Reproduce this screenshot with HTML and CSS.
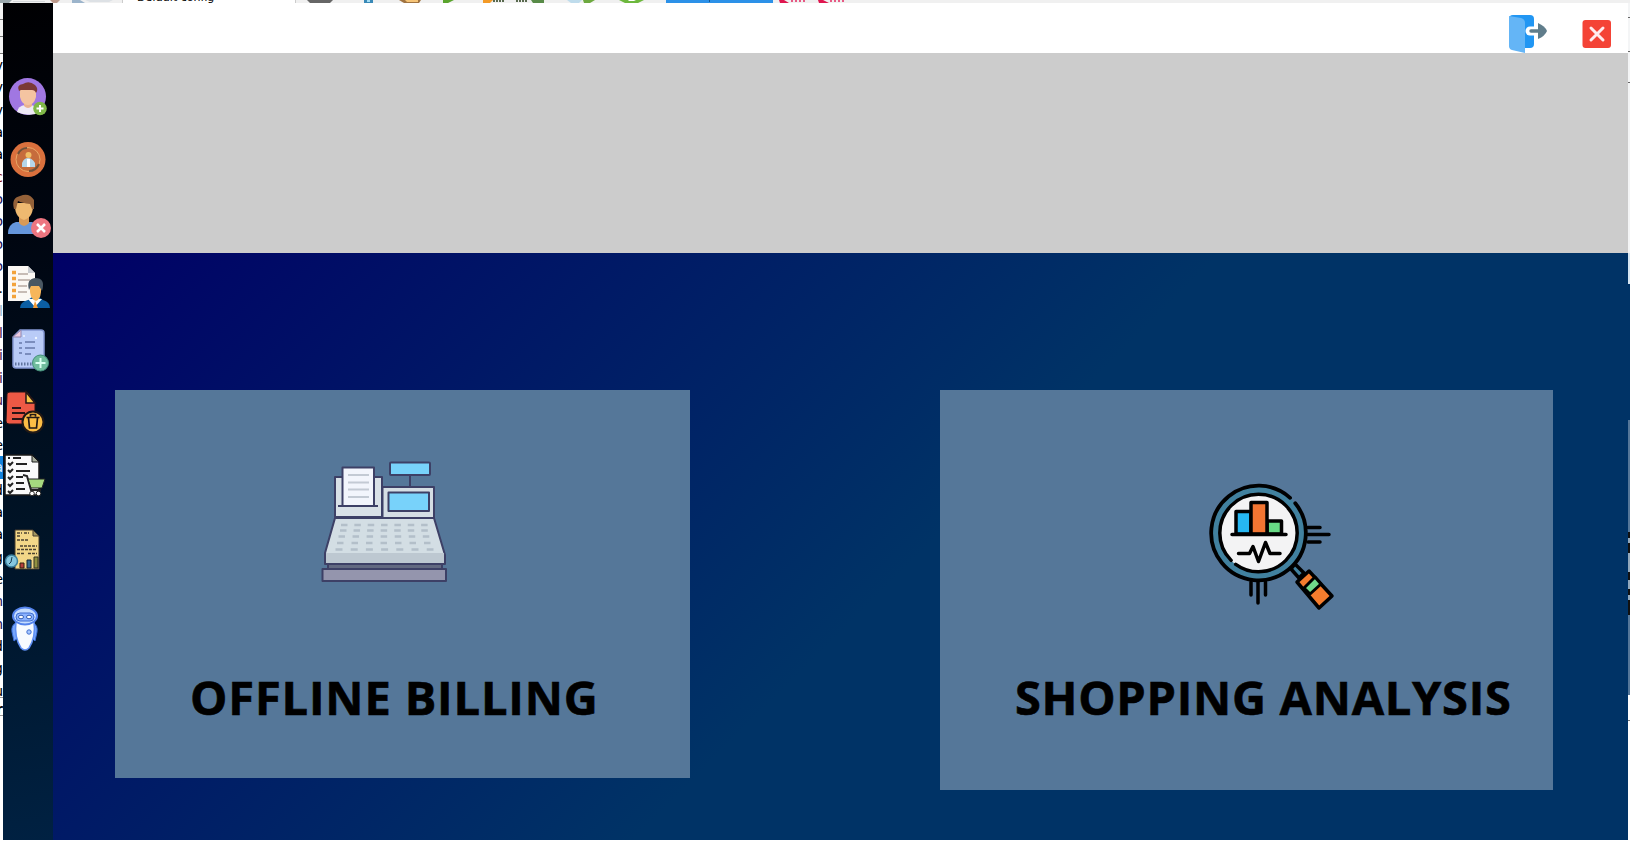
FILE: index.html
```
<!DOCTYPE html>
<html lang="en">
<head>
<meta charset="utf-8">
<title>Billing Dashboard</title>
<link rel="stylesheet" href="styles.css">
</head>
<body>
<div class="desktop">
  <div class="toolstrip">
    <svg width="1630" height="3" viewBox="0 0 1630 3">
      <rect width="1630" height="3" fill="#f0f0f0"/>
      <path d="M0 0h12l-3 3H0z" fill="#9ba8ac"/><path d="M13 1h32v1H13z" fill="#d5d8da"/><path d="M50 0h10l-3 3h-4z" fill="#bd9a8c"/>
      <path d="M72 0h8l5 3H72z" fill="#9cb4cb"/><path d="M85 0h28l-4 2H90z" fill="#dde1e5"/>
      <rect x="122" width="174" height="3" fill="#fff"/><path d="M122.500 0v3M295.500 0v3" stroke="#ccc"/>
      <path d="M307 0h26l-3 3h-20z" fill="#666"/><path d="M364 0h9v3h-9z" fill="#3989b7"/><path d="M367 0h3v2h-3z" fill="#a5def5"/>
      <path d="M399 0h22l-2 3h-15z" fill="#a17441"/><path d="M405 0h13v2h-11z" fill="#f6c477"/>
      <path d="M443 0h11l-6 3h-5z" fill="#5aa42d"/><path d="M483 0h10l-3 3h-7z" fill="#f39a27"/><path d="M493 1h11M516 1h11" stroke="#596a4e" stroke-dasharray="2 1" stroke-width="2"/>
      <path d="M531 0h13v3h-11z" fill="#588b48"/><path d="M567 0h15l-3 3h-8z" fill="#bfdcec"/><path d="M583 0h12l-5 3h-6z" fill="#6da93f"/>
      <path d="M619 0h25l-6 3h-13z" fill="#6db83d"/><path d="M628 0h8l-2 1h-5z" fill="#fff"/>
      <rect x="666" width="107" height="3" fill="#2c91e8"/><rect x="709" width="1" height="2" fill="#17558d"/>
      <path d="M779 0h5l5 3h-9zM818 0h5l6 3h-10z" fill="#df164f"/><path d="M791 1h16M830 1h16" stroke="#e75984" stroke-width="2" stroke-dasharray="2 2"/>
    </svg>
    <span class="config">Default config</span>
  </div>
  <div class="middle">
    <div class="behind-left">
      <i></i><i></i><i></i>
      <b>v</b><b>v</b><b>v</b><b>a</b><b>a</b><b class="red">c</b><b class="navy">o</b><b class="navy">o</b><b class="navy">o</b><b class="navy">o</b><b>.</b><b class="pale">l</b><b class="purple">l</b><b class="purple">i</b><b class="purple">i</b><b class="purple">u</b><b>e</b><b>e</b><b class="selected">a</b><b>d</b><b>a</b><b>a</b><b>g</b><b>e</b><b class="navy">n</b><b class="navy">n</b><b>d</b><b>g</b><b class="last">u</b><b class="last strong">r</b>
    </div>
    <div class="app">
      <nav class="sidebar">
        <svg class="add-user" viewBox="3 73 50 48"><circle cx="27.500" cy="96.500" r="18.500" fill="#a077e2"/><path d="M17 112q1-6 8-7h6q7 1 8 8-11 4-22-1z" fill="#eeeaf6"/><path d="M24 99h8v7q-4 4-8 0z" fill="#eab391"/><path d="M20 90h16v7q-2 8-8 8t-8-8z" fill="#f4c4a1"/><path d="M19 91q-3-6 4-7 6-4 12 1 4 4 1 8-1-3-4-3H21z" fill="#7a3936"/><circle cx="40" cy="108.500" r="6.800" fill="#80b849"/><path d="M40 105v7M36.500 108.500h7" stroke="#fff" stroke-width="2"/></svg>
        <svg class="user-account" viewBox="3 136 50 48"><circle cx="28" cy="159.500" r="17.500" fill="#d9703d"/><circle cx="28" cy="159.500" r="12" fill="#c66c3c" stroke="#e9a867"/><path d="M18 154q3-6 9-6M39 164q-3 7-10 7" fill="none" stroke="#70523a" stroke-width="2"/><path d="M22 167v-4q2-5 6-5t7 5v4z" fill="#b5d6ea"/><path d="M27 159h3v8h-3z" fill="#fff"/><circle cx="28.500" cy="155" r="3" fill="#f0bd65"/></svg>
        <svg class="remove-user" viewBox="3 191 50 48"><path d="M8 234q0-10 8-12h16q8 2 8 12z" fill="#6596dc"/><path d="M19 216h10v7q-5 6-10 0z" fill="#d79a59"/><path d="M15 203q-1 14 9 17 10-3 9-17z" fill="#eeb970"/><path d="M14 209q-3-11 6-13 9-4 14 4v9h-2l-2-5q-8-1-12-3l-2 8z" fill="#936139"/><circle cx="41" cy="228" r="10" fill="#ed7580"/><path d="m37 224 8 8m0-8-8 8" stroke="#fff" stroke-width="2.500"/></svg>
        <svg class="customer-list" viewBox="3 263 50 48"><path d="M8 266h20l7 7v28H8z" fill="#fbf8f4"/><path d="M28 266v7h7z" fill="#c8cbd0"/><path d="M12 272.500h4m-4 6h4m-4 6h4m-4 6h4m-4 6h4" stroke="#f3a33b" stroke-width="3.500"/><path d="M18 274h10m-10 6h12m-12 6h9m-9 6h9" stroke="#b7a8a0" stroke-width="1.500"/><path d="M20 308q0-6 8-8l4-3h7l4 3q7 2 7 8z" fill="#0b5ea3"/><path d="m28 299 7 8 7-8z" fill="#fff"/><path d="M30 284h11v8q-1 8-5 9-5-1-6-9z" fill="#f7b65b"/><path d="M29 290q-3-11 6-12 11 0 7 13l-3-5h-8z" fill="#495762"/><path d="m35 301 3 7h-5z" fill="#f49c37"/></svg>
        <svg class="add-bill" viewBox="3 327 50 48"><path d="M20 330h21q3 0 3 3v32q0 3-3 3H16q-3 0-3-3v-28z" fill="#b9cbf7" stroke="#8498d3" stroke-width="1.500"/><path d="M21 330v7h-8z" fill="#efcbe1" stroke="#8f86ac"/><path d="M19 343h3m-3 5h3m-3 5h3M25 342h10m-10 6h10m-10 6h6" stroke="#6779aa" stroke-width="1.700"/><path d="M15 364h17" stroke="#60759f" stroke-width="3" stroke-dasharray="1.500 1.500"/><circle cx="24" cy="336" r="1" fill="#eef5ff"/><circle cx="36" cy="338" r="1.200" fill="#eef5ff"/><circle cx="40.500" cy="363" r="8" fill="#71bd9e" stroke="#458f7c"/><path d="M40.500 358v10m-5-5h10" stroke="#d9fff1" stroke-width="2"/></svg>
        <svg class="delete-bill" viewBox="3 388 50 48"><path d="M7 394q0-2 3-2h17l8 10v20q0 2-3 2H9q-3 0-3-3z" fill="#ed5945" stroke="#231516"/><path d="M26 392v11h9z" fill="#f9c64a" stroke="#231516" stroke-width="1.500"/><path d="M12 408h9m-9 5h13m-13 6h10" stroke="#2b1517" stroke-width="2"/><circle cx="33" cy="422" r="10.500" fill="#fcbd45" stroke="#211916" stroke-width="2"/><path d="M28.500 418l1 10h7l1-10m-11-.5h13m-9-1v-2h5v2" fill="none" stroke="#211916" stroke-width="1.700"/></svg>
        <svg class="shopping-list" viewBox="3 452 50 48"><path d="M5 455h27l7 7v33H5z" fill="#fafafa" stroke="#191919" stroke-width="1.500"/><path d="M32 455v7h7z" fill="#a7ad9c" stroke="#191919"/><path d="m8 463 2 2 3-3m-5 8 2 2 3-3m-5 8 2 2 3-3m-5 8 2 2 3-3m-5 8 2 2 3-3M8 458h2m3 0h8M16 464h11m-11 7h14m-14 6h7m-7 6h8m-8 6h9" fill="none" stroke="#222" stroke-width="2"/><path d="m23 475 4 1 4 14h10" fill="none" stroke="#222" stroke-width="2"/><path d="M28 479h17l-3 9H31z" fill="#a5d97f" stroke="#222"/><circle cx="32" cy="493.500" r="2.300" fill="#fff" stroke="#222"/><circle cx="38.500" cy="493.500" r="2.300" fill="#fff" stroke="#222"/></svg>
        <svg class="report" viewBox="3 526 50 48"><path d="M15 530h18l6 6v33H15z" fill="#f3d788" stroke="#463d2e"/><path d="M33 530v6h6z" fill="#a39661" stroke="#463d2e"/><path d="M17 533h5m2 0h5M17 536h3M17 540h12M20 546h17m-20 3.500h20m-20 4h8m3 0h9" stroke="#4b4230" stroke-width="1.700" stroke-dasharray="3 1"/><path d="M20 563h4v5h-4z" fill="#b83f3c" stroke="#321"/><path d="M27 560h4v8h-4z" fill="#356b91" stroke="#123"/><path d="M34 557h4v11h-4z" fill="#929141" stroke="#332"/><circle cx="11.500" cy="561" r="6" fill="#86c7df" stroke="#3b7f9d" stroke-width="1.500"/><path d="m12 557-1 5-2 2" fill="none" stroke="#193c51"/></svg>
        <svg class="assistant" viewBox="4 605 50 48"><path d="M17 623q-5 2-4 9l2 9 5-4zm17 0q5 2 4 9l-2 9-4-4z" fill="#76a6fb" stroke="#3b6ed9"/><path d="M17 622h18q2 15-5 26-4 4-8 0-7-11-5-26z" fill="#f7fbff" stroke="#5e8ff4" stroke-width="1.500"/><ellipse cx="26" cy="616" rx="12" ry="8.500" fill="#c5ddff" stroke="#5383ed" stroke-width="2"/><rect x="17" y="613" width="18" height="8" rx="4" fill="#8bb3ff" stroke="#416fd1"/><ellipse cx="22" cy="617" rx="2.500" ry="1.800" fill="#fff" stroke="#315cb2"/><ellipse cx="30" cy="617" rx="2.500" ry="1.800" fill="#fff" stroke="#315cb2"/><circle cx="30" cy="632" r="2.200" fill="#a8c9ff" stroke="#416fd1"/></svg>
      </nav>
      <main>
        <header>
          <svg class="logout" viewBox="1508 13 40 41"><rect x="1509" y="15" width="25" height="33" rx="4" fill="#2196f3"/><path d="m1509 16 12 2q4 1 4 5v30l-13-3q-3-1-3-4z" fill="#64b5f6"/><path d="M1530 31h8" stroke="#fff" stroke-width="9" stroke-linecap="round"/><path d="M1531 31h11" stroke="#607d8b" stroke-width="3.500" stroke-linecap="round"/><path d="M1538 23q7 3 9 8-2 5-9 8z" fill="#607d8b"/></svg>
          <svg class="close" viewBox="1582 19 30 30"><rect x="1582.500" y="20" width="28.500" height="28" rx="3" fill="#f44336"/><path d="m1591 28 12 12m0-12-12 12" stroke="#ffebee" stroke-width="3" stroke-linecap="round"/></svg>
        </header>
        <section class="banner"></section>
        <section class="content">
          <div class="card billing">
            <svg class="register" viewBox="320 460 130 124"><g stroke="#3d4066" stroke-width="2" stroke-linejoin="round"><path d="M410 475v12"/><rect x="390" y="462.500" width="40" height="12.500" rx="1" fill="#78d2fa"/><path d="M335 477h47v40h-47z" fill="#d9e1e7"/><path d="M382.500 487H434v31h-51.500z" fill="#d5dee4"/><path d="M342.500 467.500H374V506h-31.500z" fill="#f2f5fc"/><path d="M338 506h40"/><path d="M388.500 492.500H429V511h-40.500z" fill="#78d2fa"/><path d="M328 564h114v5H328z" fill="#626981"/><path d="M335 518h99l11 37v9H325v-11z" fill="#d3dee4"/><path d="M322.500 569H446v12H322.500z" fill="#9495ad"/></g><path d="M326 553h118v10H326z" fill="#bdc8d1"/><g fill="none" stroke="#c3cad4" stroke-width="2"><path d="M348 475h21m-21 7.500h21m-21 7h21m-21 7.500h21"/></g><g fill="none" stroke="#b3bfc9" stroke-width="2.600"><path d="M341 525h87" stroke-dasharray="6.500 6.850"/><path d="M340 530.500h88" stroke-dasharray="6.500 7.050"/><path d="M338.500 536.500h91" stroke-dasharray="6.500 7.550"/><path d="M337 543h94" stroke-dasharray="6.500 8"/><path d="M335.500 549.500h98" stroke-dasharray="7 8.200"/></g></svg>
            <h2>OFFLINE BILLING</h2>
          </div>
          <div class="card analysis">
            <svg class="magnifier" viewBox="1205 480 132 132"><g fill="none" stroke="#000" stroke-width="3.500" stroke-linecap="round" stroke-linejoin="round"><path d="M1308 527.500h12M1308 534.500h21M1308 542h12M1251 582v13M1258 582v21M1265.500 582v13"/><circle cx="1258.500" cy="533" r="43" fill="#f3f3f4" stroke="#41819f" stroke-width="8"/><circle cx="1258.500" cy="533" r="38.700" stroke-dasharray="236.700 6.400" transform="rotate(135 1258.500 533)"/><circle cx="1258.500" cy="533" r="47.300" stroke-width="3.800" stroke-dasharray="289.200 8" transform="rotate(-39 1258.500 533)"/><path d="M1236 511.500h15V534h-15z" fill="#26b7f2"/><path d="M1267 521h14.500v13H1267z" fill="#67d984"/><path d="M1251 502.500h16V534h-16z" fill="#f27532"/><path d="M1232 534.500h54M1238.500 553.500h11l3.500-7 5.500 15 7-19 4.500 11h10"/><path d="m1291 569 8 9 5-5-9-9z" fill="#41819f"/><path d="m1297 582 12-11 23 25-13 12z" fill="#f57d2d"/><path d="m1304 588 11-11 6 7-11 10z" fill="#70d98a" stroke-width="3"/></g></svg>
            <h2>SHOPPING ANALYSIS</h2>
          </div>
        </section>
      </main>
    </div>
    <div class="behind-right"><svg width="2" height="837" viewBox="0 3 2 837"><path d="M0 3h2v280H0z" fill="#f4f5f6"/><path d="M0 17.500h2M0 51.500h2M0 82.500h2" stroke="#666"/><path d="M0 253h2v31H0z" fill="#d5e5f2"/><path d="M0 284h2v136H0z" fill="#036"/><path d="M0 420h2v275H0z" fill="#557799"/><path d="M0 532h2v83H0z" fill="#111"/><path d="M0 538h2v5H0zm0 15h2v19H0zm0 27h2v9H0zm0 15h2v5H0z" fill="#92a8bb"/><path d="M0 695h2v145H0z" fill="#fff"/><path d="M0 720.500h2" stroke="#777"/></svg></div>
  </div>
</div>
</body>
</html>
```
FILE: styles.css
```
* { box-sizing: border-box; }
body { margin: 0; background: #fff; font-family: "Open Sans", "Noto Sans", sans-serif; overflow: hidden; }
svg { display: block; }
.desktop { width: 1630px; height: 843px; overflow: hidden; }
.toolstrip { position: relative; height: 3px; overflow: hidden; }
.config { position: absolute; left: 137px; top: -8px; font: 11px/12px "DejaVu Sans", sans-serif; color: #000; }
.middle { display: flex; height: 837px; }
.behind-left { width: 3px; height: 837px; overflow: hidden; background: #fff; display: flex; flex-direction: column; }
.behind-left i { height: 17px; flex: none; border-bottom: 1px solid #777; background: #f4f4f4; }
.behind-left b { flex: none; height: 22.35px; display: flex; justify-content: flex-end; font: 14px/22px "DejaVu Sans", sans-serif; }
.behind-left .red { color: #811; }
.behind-left .navy { color: #1a1459; }
.behind-left .purple { color: #4b174d; }
.behind-left .pale { color: #8fb3c9; }
.behind-left .selected { background: #1382dc; color: #d5ecff; }
.behind-left .last { height: 18px; border-bottom: 1px solid #999; }
.behind-left .strong { font-weight: bold; }
.app { width: 1625px; height: 837px; display: flex; }
.sidebar { width: 50px; padding-top: 70px; background: linear-gradient(170deg, #000002 0%, #000611 28%, #001326 62%, #002142 100%); }
.sidebar svg { width: 50px; height: 48px; }
.sidebar .user-account { margin-top: 15px; }
.sidebar .remove-user { margin-top: 7px; }
.sidebar .customer-list { margin-top: 24px; }
.sidebar .add-bill { margin-top: 16px; }
.sidebar .delete-bill { margin-top: 13px; }
.sidebar .shopping-list { margin-top: 16px; }
.sidebar .report { margin-top: 26px; }
.sidebar .assistant { margin-top: 31px; }
main { width: 1575px; }
header { height: 50px; display: flex; justify-content: flex-end; background: #fff; overflow: hidden; }
.logout { width: 40px; height: 41px; margin-top: 10px; }
.close { width: 30px; height: 30px; margin: 16px 16px 0 34px; }
.banner { height: 200px; background: #ccc; }
.content { height: 587px; padding: 137px 75px 0 62px; display: flex; align-items: flex-start; justify-content: space-between; background: linear-gradient(135deg, #000066 0%, #003366 54%); }
.card { background: #557799; overflow: hidden; }
.billing { width: 575px; height: 388px; }
.analysis { width: 613px; height: 400px; }
.register { width: 130px; height: 124px; margin: 70px 0 0 205px; }
.magnifier { width: 132px; height: 132px; margin: 90px 0 0 265px; }
h2 { margin: 0; font-size: 47px; line-height: 60px; font-weight: 700; white-space: nowrap; color: #000; -webkit-text-stroke: 0.6px #000; }
.billing h2 { margin: 83px 0 0 75px; letter-spacing: 0.85px; }
.analysis h2 { margin: 55px 0 0 75px; letter-spacing: 0.7px; }
```
